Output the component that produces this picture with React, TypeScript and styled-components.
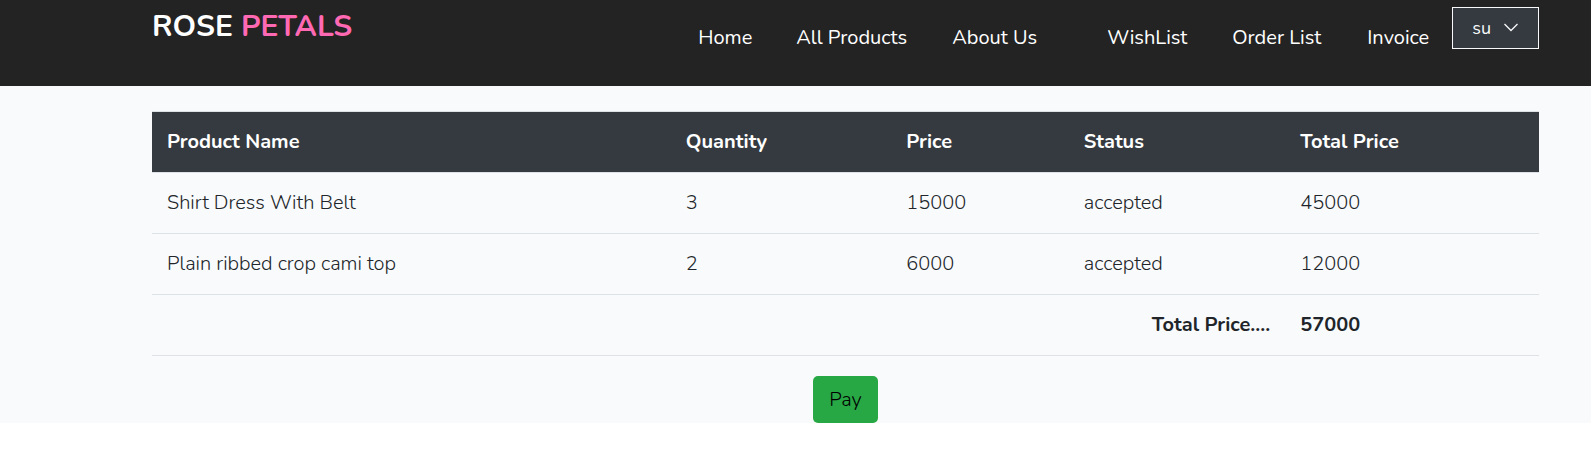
import React from "react";
import styled, { createGlobalStyle } from "styled-components";

const GlobalStyle = createGlobalStyle`
  *, *::before, *::after { box-sizing: border-box; }
  body {
    margin: 0;
    background: #fff;
    color: #212529;
    font-family: Nunito, Lato, "Open Sans", sans-serif;
    font-size: 20px;
    font-weight: 300;
    line-height: 30px;
  }
`;

const Header = styled.header`
  display: flex;
  justify-content: space-between;
  align-items: flex-start;
  min-height: 86px;
  padding: 7px 52px 0 152px;
  background: #232323;
`;

const Brand = styled.a`
  color: #fff;
  font-size: 30px;
  font-weight: 700;
  line-height: 40px;
  text-decoration: none;
`;

const BrandAccent = styled.span`
  color: #ff69b4;
`;

const Nav = styled.nav`
  display: flex;
  align-items: flex-start;
`;

const NavGroup = styled.ul`
  display: flex;
  margin: 0;
  padding: 16px 0 0;
  list-style: none;

  & + & { margin-left: 25px; }
`;

const NavLink = styled.a<{ $width: number }>`
  display: block;
  min-width: ${(p) => p.$width}px;
  padding-left: 23px;
  color: #fff;
  font-weight: 400;
  white-space: nowrap;
  text-decoration: none;
`;

const UserButton = styled.button`
  display: flex;
  align-items: center;
  gap: 12px;
  height: 42px;
  padding: 0 19px;
  border: 1px solid #f8f9fa;
  background: #343a40;
  color: #f8f9fa;
  font-family: inherit;
  font-size: 18px;
  font-weight: 400;
  cursor: pointer;
`;

const Main = styled.main`
  display: flex;
  flex-direction: column;
  align-items: center;
  gap: 20px;
  padding: 25px 52px 0 152px;
  background: #f8fafc;
`;

const Table = styled.table`
  width: 100%;
  table-layout: fixed;
  border-collapse: collapse;
`;

const HeadCell = styled.th<{ $width: string }>`
  width: ${(p) => p.$width};
  padding: 15px;
  border-top: 1px solid #dee2e6;
  border-bottom: 1px solid #dee2e6;
  background: #343a40;
  color: #fff;
  font-weight: 700;
  text-align: left;
`;

const Cell = styled.td<{ $strong?: boolean; $end?: boolean }>`
  padding: 15px;
  border-bottom: 1px solid #dee2e6;
  font-weight: ${(p) => (p.$strong ? 700 : 300)};
  text-align: ${(p) => (p.$end ? "right" : "left")};
`;

const PayButton = styled.button`
  height: 47px;
  padding: 0 16px;
  border: 0;
  border-radius: 5px;
  background: #28a745;
  color: #000;
  font: inherit;
  cursor: pointer;
`;

const shopLinks = [
  { label: "Home", width: 98 },
  { label: "All Products", width: 156 },
  { label: "About Us", width: 130 },
];

const orderLinks = [
  { label: "WishList", width: 125 },
  { label: "Order List", width: 135 },
  { label: "Invoice", width: 108 },
];

const columns = [
  { label: "Product Name", width: "37.4%" },
  { label: "Quantity", width: "15.9%" },
  { label: "Price", width: "12.8%" },
  { label: "Status", width: "15.6%" },
  { label: "Total Price", width: "18.3%" },
];

const items = [
  { name: "Shirt Dress With Belt", quantity: 3, price: 15000, status: "accepted" },
  { name: "Plain ribbed crop cami top", quantity: 2, price: 6000, status: "accepted" },
];

const total = items.reduce((sum, item) => sum + item.quantity * item.price, 0);

function Links({ links }: { links: { label: string; width: number }[] }) {
  return (
    <NavGroup>
      {links.map((link) => (
        <li key={link.label}>
          <NavLink href="#" $width={link.width}>{link.label}</NavLink>
        </li>
      ))}
    </NavGroup>
  );
}

export default function App() {
  return (
    <>
      <GlobalStyle />
      <Header>
        <Brand href="#">
          ROSE <BrandAccent>PETALS</BrandAccent>
        </Brand>
        <Nav>
          <Links links={shopLinks} />
          <Links links={orderLinks} />
          <UserButton type="button" aria-haspopup="menu">
            su
            <svg width="16" height="16" viewBox="0 0 16 16" fill="none" stroke="currentColor" strokeWidth="1.3" aria-hidden="true">
              <path d="M1.500 4 8 10.500 14.500 4" />
            </svg>
          </UserButton>
        </Nav>
      </Header>
      <Main>
        <Table>
          <thead>
            <tr>
              {columns.map((column) => (
                <HeadCell key={column.label} scope="col" $width={column.width}>{column.label}</HeadCell>
              ))}
            </tr>
          </thead>
          <tbody>
            {items.map((item) => (
              <tr key={item.name}>
                <Cell>{item.name}</Cell>
                <Cell>{item.quantity}</Cell>
                <Cell>{item.price}</Cell>
                <Cell>{item.status}</Cell>
                <Cell>{item.quantity * item.price}</Cell>
              </tr>
            ))}
            <tr>
              <Cell colSpan={4} $strong $end>Total Price....</Cell>
              <Cell $strong>{total}</Cell>
            </tr>
          </tbody>
        </Table>
        <PayButton type="button">Pay</PayButton>
      </Main>
    </>
  );
}
